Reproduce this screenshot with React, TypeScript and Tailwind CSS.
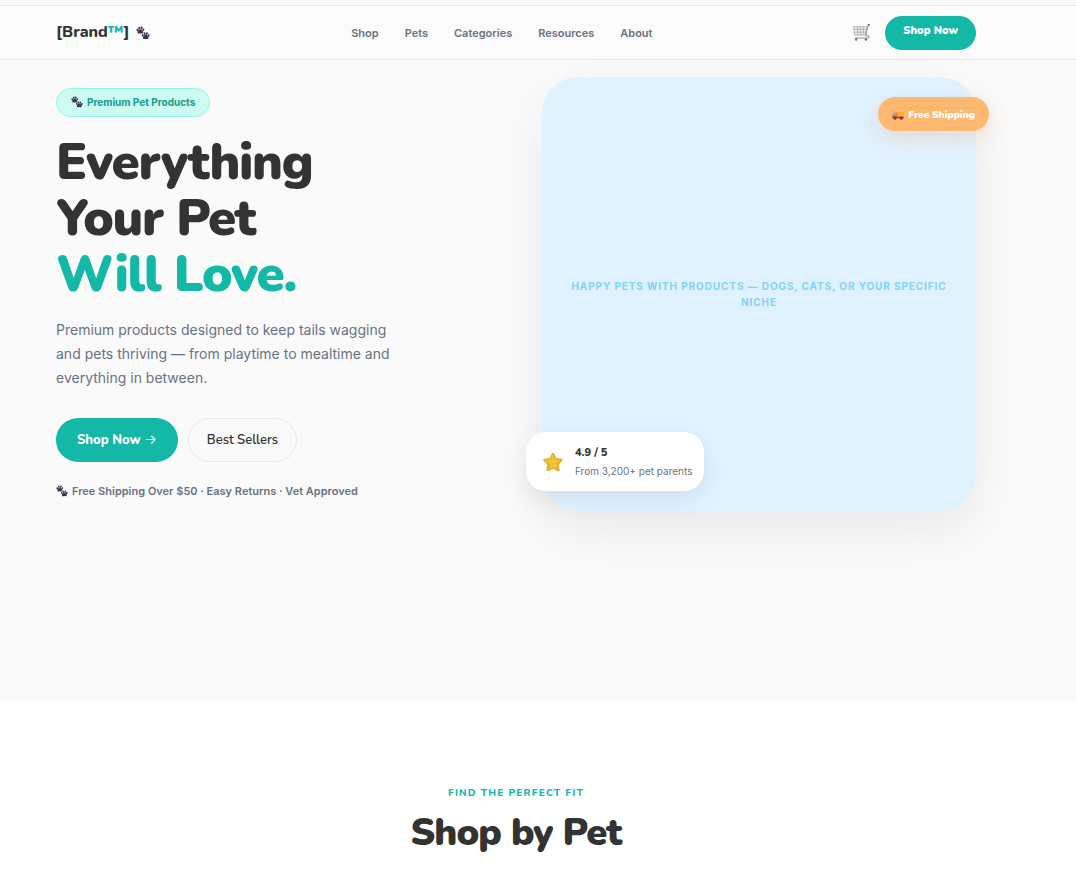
import type { ReactNode } from 'react'

const navLinks = ['Shop', 'Pets', 'Categories', 'Resources', 'About']

function PawIcon({ className }: { className?: string }) {
  return (
    <svg className={className} viewBox="0 0 32 32" fill="#3b3350" aria-hidden="true">
      <ellipse cx="3.4" cy="9" rx="2.3" ry="3" transform="rotate(-20 3.4 9)" />
      <ellipse cx="7.6" cy="4.6" rx="2.3" ry="3.1" transform="rotate(-8 7.6 4.6)" />
      <ellipse cx="12.8" cy="4.4" rx="2.3" ry="3.1" transform="rotate(10 12.8 4.4)" />
      <ellipse cx="16.8" cy="8.6" rx="2.2" ry="2.9" transform="rotate(22 16.8 8.6)" />
      <path d="M10 7.500c3.500 0 6.800 4.500 6.600 7.200-.2 2.500-2.700 2.800-4.800 2.300-1.200-.2-2.300-.2-3.400.1-2.200.6-4.800.2-4.900-2.400C3.400 12 6.500 7.500 10 7.500z" />
      <ellipse cx="15.400" cy="21.500" rx="2.200" ry="2.900" transform="rotate(-20 15.400 21.500)" />
      <ellipse cx="19.600" cy="17.400" rx="2.300" ry="3" transform="rotate(-8 19.600 17.400)" />
      <ellipse cx="24.800" cy="17.400" rx="2.300" ry="3" transform="rotate(10 24.800 17.400)" />
      <ellipse cx="28.800" cy="21.600" rx="2.200" ry="2.900" transform="rotate(22 28.800 21.600)" />
      <path d="M22.200 20.200c3.500 0 6.800 4.500 6.600 7.200-.2 2.500-2.700 2.800-4.800 2.300-1.200-.2-2.300-.2-3.400.1-2.200.6-4.800.2-4.900-2.400-.1-2.700 3-7.200 6.500-7.200z" />
    </svg>
  )
}

function CartIcon() {
  return (
    <svg className="h-[17px] w-[17px]" viewBox="0 0 32 32" fill="none" aria-hidden="true">
      <path d="M1 5h26l-3.500 16H3z" fill="#eeedf1" />
      <path
        d="M1 5h25.500L23 20.500 3 21zM2 10h24M2.500 15.500h22M8 5l1 16M14 5v16M20 5l-1 16"
        stroke="#b0adb5"
        strokeWidth="1.600"
      />
      <path d="M31 1.500h-2.500L24 21.500l4.500 1c2.500 1 2 4-.5 4H4" stroke="#918e99" strokeWidth="2" strokeLinejoin="round" />
      <path d="M28 1.500h3.500" stroke="#57535e" strokeWidth="2.500" />
      <circle cx="6" cy="29" r="2.300" fill="#6c6890" />
      <circle cx="24.500" cy="29" r="2.300" fill="#6c6890" />
    </svg>
  )
}

function TruckIcon() {
  return (
    <svg className="h-3 w-3" viewBox="0 0 32 32" aria-hidden="true">
      <path d="M13 7h16a2 2 0 0 1 2 2v11H13z" fill="#f5b02e" />
      <path d="M5 10h8v13H1v-6z" fill="#e8663c" />
      <path d="M5 10h6v8H2z" fill="#6fb3d8" />
      <path d="M1 20h30v5H1z" fill="#c9352d" />
      <circle cx="8" cy="25" r="3.500" fill="#5a3c44" />
      <circle cx="25" cy="25" r="3.500" fill="#5a3c44" />
    </svg>
  )
}

function StarIcon() {
  return (
    <svg className="h-5 w-5 shrink-0" viewBox="0 0 32 32" aria-hidden="true">
      <path
        d="M14.100 2.200c.8-1.600 3-1.600 3.800 0l3.600 7.200 8.300 1.200c1.700.2 2.400 2.300 1.200 3.500l-5.700 5.900 1.300 8.500c.3 1.700-1.500 3-3 2.200L16 26.900l-7.600 3.800c-1.500.8-3.300-.5-3-2.200L6.700 20 1 14.100c-1.200-1.200-.5-3.300 1.200-3.500l8.300-1.200z"
        fill="#e2b32c"
      />
      <path d="M15.500 3.500l-3 8-9 1.500 7.500 6-1.500 8 6.500-4 6.500 3-1.500-7.500 5.500-5.500-7.500-1.500z" fill="#edc63c" />
    </svg>
  )
}

function Container({ className, children }: { className?: string; children: ReactNode }) {
  return (
    <div className="pr-11">
      <div className={`px-14 ${className ?? ''}`}>{children}</div>
    </div>
  )
}

function Header() {
  return (
    <header className="mt-[5px] border-y border-[#e2e4e8] bg-[#fbfbfc]">
      <Container className="flex h-[53px] items-center justify-between">
        <a href="#" className="flex items-center gap-[7px] pb-0.5 font-[Nunito,Lato,sans-serif] text-base font-extrabold text-[#333]">
          <span>
            [Brand<span className="text-[#14b8a6]">™</span>]
          </span>
          <PawIcon className="mt-0.5 h-3.5 w-3.5" />
        </a>
        <nav className="flex gap-[26px] pt-0.5 text-[11px] font-semibold text-gray-500">
          {navLinks.map((label) => (
            <a key={label} href="#">{label}</a>
          ))}
        </nav>
        <div className="flex items-center gap-[15px]">
          <button aria-label="Cart"><CartIcon /></button>
          <button className="h-[34px] rounded-full bg-[#14b8a6] px-[18px] pb-0.5 font-[Nunito,Lato,sans-serif] text-[11px] font-black text-white">
            Shop Now
          </button>
        </div>
      </Container>
    </header>
  )
}

function Hero() {
  return (
    <section className="min-h-[640px] pt-[17px]">
      <Container className="grid grid-cols-2 items-center gap-[52px]">
        <div>
          <div className="flex h-[29px] w-fit items-center gap-1 rounded-full border border-teal-200 bg-[#ccfbf1] px-3.5 text-[10px] font-bold text-[#149c8e]">
            <PawIcon className="h-3 w-3" />
            Premium Pet Products
          </div>
          <h1 className="mt-[17px] font-[Nunito,Lato,sans-serif] text-[51px] leading-[56px] font-black tracking-tight text-[#333]">
            Everything
            <br />
            Your Pet
            <br />
            <span className="text-[#14b8a6]">Will Love.</span>
          </h1>
          <p className="mt-4 max-w-[350px] text-sm leading-6 text-gray-500">
            Premium products designed to keep tails wagging and pets thriving — from playtime to mealtime and everything in between.
          </p>
          <div className="mt-7 flex gap-2.5 font-[Nunito,Lato,sans-serif] text-[13px]">
            <button className="h-11 rounded-full bg-[#14b8a6] px-[21px] pt-0.5 font-extrabold text-white">
              Shop Now <span className="font-[Inter,sans-serif] font-normal">→</span>
            </button>
            <button className="h-11 rounded-full border border-gray-200 px-[18px] pt-0.5 font-semibold text-[#333]">Best Sellers</button>
          </div>
          <p className="mt-[19px] flex items-center gap-1 text-[11px] leading-5 font-semibold text-gray-500">
            <PawIcon className="h-3 w-3" />
            Free Shipping Over $50 · Easy Returns · Vet Approved
          </p>
        </div>

        <div className="relative flex aspect-square items-center justify-center rounded-[36px] bg-[#e0f1ff] px-6 text-center shadow-[0_20px_50px_rgba(0,0,0,0.07)]">
          <p className="text-[10px] leading-4 font-bold tracking-[0.09em] text-[#7dd3fc] uppercase">
            Happy pets with products — dogs, cats, or your specific niche
          </p>
          <div className="absolute top-5 -right-[13px] flex h-[34px] items-center gap-1 rounded-full bg-[#ffb870] px-3.5 pt-0.5 font-[Nunito,Lato,sans-serif] text-[10px] font-black text-white shadow-[0_8px_20px_rgba(240,140,60,0.2)]">
            <TruckIcon />
            Free Shipping
          </div>
          <div className="absolute bottom-5 -left-4 flex h-[59px] items-center gap-3 rounded-[20px] bg-white pr-3 pl-[17px] text-left shadow-[0_8px_24px_rgba(0,0,0,0.08)]">
            <StarIcon />
            <div>
              <div className="font-[Nunito,Lato,sans-serif] text-[11px] leading-[18px] font-extrabold text-[#333]">4.9 / 5</div>
              <div className="text-[10px] leading-[18px] text-gray-500">From 3,200+ pet parents</div>
            </div>
          </div>
        </div>
      </Container>
    </section>
  )
}

export default function App() {
  return (
    <div className="flow-root min-h-screen bg-[#fafafa] font-[Inter,sans-serif]">
      <Header />
      <Hero />
      <section className="min-h-[170px] bg-white pt-[85px]">
        <Container className="text-center font-[Nunito,Lato,sans-serif]">
          <p className="text-[10px] leading-4 font-extrabold tracking-[0.12em] text-[#14b8a6] uppercase">Find the perfect fit</p>
          <h2 className="mt-2 text-[38px] leading-[48px] font-black tracking-tight text-[#333]">Shop by Pet</h2>
        </Container>
      </section>
    </div>
  )
}
